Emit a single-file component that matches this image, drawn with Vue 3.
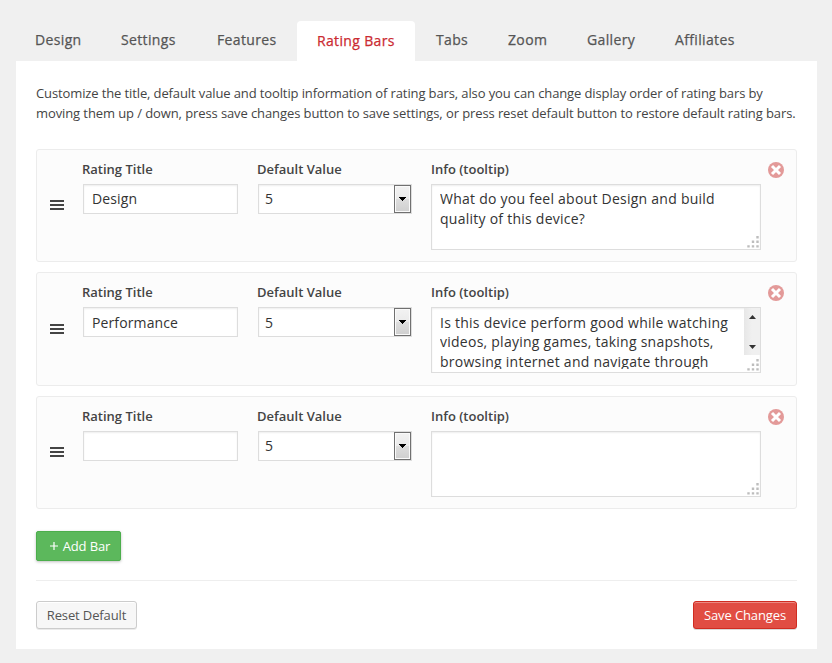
<script setup>
import { ref } from 'vue'

const tabs = [
  { name: 'Design', width: 86 },
  { name: 'Settings', width: 96 },
  { name: 'Features', width: 100 },
  { name: 'Rating Bars', width: 118 },
  { name: 'Tabs', width: 72 },
  { name: 'Zoom', width: 79 },
  { name: 'Gallery', width: 88 },
  { name: 'Affiliates', width: 100 },
]
const active = ref('Rating Bars')

const bars = ref([
  { title: 'Design', value: 5, info: 'What do you feel about Design and build quality of this device?', scroll: false },
  { title: 'Performance', value: 5, info: 'Is this device perform good while watching videos, playing games, taking snapshots, browsing internet and navigate through', scroll: true },
  { title: '', value: 5, info: '', scroll: false },
])

const addBar = () => bars.value.push({ title: '', value: 5, info: '', scroll: false })
const removeBar = (i) => bars.value.splice(i, 1)
</script>

<template>
  <div class="page">
    <nav class="tabs">
      <a
        v-for="t in tabs"
        :key="t.name"
        class="tab"
        :class="{ active: t.name === active }"
        :style="{ width: t.width + 'px' }"
        @click="active = t.name"
      >{{ t.name }}</a>
    </nav>
    <main class="panel">
      <p class="intro">
        <span class="lead">Customize the title, default value and tooltip information of rating bars, also you can change display order of rating bars by</span><br>
        moving them up / down, press save changes button to save settings, or press reset default button to restore default rating bars.
      </p>

      <div class="bars">
        <section v-for="(b, i) in bars" :key="i" class="card">
          <div class="handle"><i></i><i></i><i></i></div>
          <div class="field title">
            <label>Rating Title</label>
            <input v-model="b.title" class="box" type="text" spellcheck="false">
          </div>
          <div class="field value">
            <label>Default Value</label>
            <div class="box select">
              <span class="number">{{ b.value }}</span>
              <span class="drop">
                <svg width="7" height="4" viewBox="0 0 7 4" shape-rendering="crispEdges"><path d="M0 0h7v1H6v1H5v1H4v1H3V3H2V2H1V1H0z" /></svg>
              </span>
            </div>
          </div>
          <div class="field info">
            <label>Info (tooltip)</label>
            <div class="box area">
              <textarea v-model="b.info" spellcheck="false"></textarea>
              <div v-if="b.scroll" class="scrollbar">
                <svg width="7" height="4" viewBox="0 0 7 4"><path d="M3.5 0L7 4H0z" /></svg>
                <svg width="7" height="4" viewBox="0 0 7 4"><path d="M0 0h7L3.5 4z" /></svg>
              </div>
              <svg class="grip" width="12" height="12" viewBox="0 0 12 12" fill="#bdbdbd">
                <path d="M9.3 0h2.4v2.4H9.3zM4.8 4.6h2.4V7H4.8zM9.3 4.6h2.4V7H9.3zM.3 9.2h2.4v2.4H.3zM4.8 9.2h2.4v2.4H4.8zM9.3 9.2h2.4v2.4H9.3z" />
              </svg>
            </div>
          </div>
          <button class="remove" aria-label="Remove" @click="removeBar(i)">
            <svg width="16" height="16" viewBox="0 0 16 16">
              <circle cx="8" cy="8" r="8" fill="#e39a99" />
              <path d="M4 4l8 8M12 4l-8 8" stroke="#fff" stroke-width="3" />
            </svg>
          </button>
        </section>
      </div>

      <button class="btn add" @click="addBar">
        <svg width="8" height="8" viewBox="0 0 8 8"><path d="M4 0v8M0 4h8" stroke="#fff" stroke-width="1.2" /></svg>
        Add Bar
      </button>

      <footer class="footer">
        <button class="btn reset">Reset Default</button>
        <button class="btn save">Save Changes</button>
      </footer>
    </main>
  </div>
</template>

<style>
body {
  background: #f0f0f0;
  overflow: hidden;
}
</style>

<style scoped>
* {
  box-sizing: border-box;
}
.page {
  font-family: "Open Sans", "Noto Sans", sans-serif;
  font-size: 13px;
  color: #444;
  height: 663px;
  padding: 21px 15px 0;
  background: #f0f0f0;
}
.tabs {
  display: flex;
  height: 40px;
}
.tab {
  flex: none;
  padding-left: 20px;
  font-size: 14px;
  font-weight: 500;
  letter-spacing: 0.35px;
  -webkit-text-stroke: 0.25px currentColor;
  line-height: 38px;
  color: #555;
  white-space: nowrap;
  cursor: pointer;
}
.tab.active {
  margin-right: 1px;
  line-height: 40px;
  color: #cb2a31;
  background: #fff;
  border-radius: 4px 4px 0 0;
}
.panel {
  width: 801px;
  height: 588px;
  margin-left: 1px;
  padding: 22px 20px 0;
  background: #fff;
}
.intro {
  margin: 0;
  line-height: 20px;
  letter-spacing: -0.097px;
  white-space: nowrap;
}
.lead {
  letter-spacing: -0.117px;
}
.bars {
  display: flex;
  flex-direction: column;
  gap: 10.35px;
  margin-top: 25.95px;
}
.card {
  display: flex;
  height: 113.12px;
  padding: 10px 12px 0 13px;
  background: #fcfcfc;
  border: 1px solid #ececec;
  border-radius: 3px;
}
.handle {
  display: flex;
  flex-direction: column;
  gap: 2px;
  width: 14px;
  margin: 40.15px 19px 0 0;
}
.handle i {
  height: 2px;
  background: #444;
}
.field label {
  display: block;
  height: 24px;
  margin-left: -1px;
  font-size: 13px;
  font-weight: 600;
  line-height: 18px;
  white-space: nowrap;
}
.title {
  width: 155px;
  margin-right: 20px;
}
.value {
  width: 154px;
  margin-right: 19px;
}
.info {
  width: 330px;
  margin-right: 7px;
}
.info label {
  margin-left: 0;
}
.box {
  display: block;
  width: 100%;
  height: 30px;
  border: 1px solid #ddd;
  background: #fff;
  box-shadow: inset 0 1px 2px rgba(0, 0, 0, 0.07);
  font-family: inherit;
  font-size: 14px;
  color: #333;
  outline: none;
}
input.box {
  padding: 0 8px 0.6px;
  letter-spacing: 0.12px;
}
.select {
  display: flex;
  justify-content: space-between;
  padding: 0 0 0 6px;
  line-height: 28px;
}
.number {
  padding-top: 0.25px;
}
.drop {
  display: flex;
  align-items: center;
  justify-content: center;
  width: 17px;
  height: 28px;
  border: 1px solid #707070;
  box-shadow: inset 0 0 0 1px #fafafa;
  background: linear-gradient(#f2f2f2 0%, #ebebeb 48%, #ddd 52%, #cfcfcf 100%);
}
.area {
  position: relative;
  height: 66px;
  padding: 4.2px 0 0 8px;
}
.area textarea {
  display: block;
  width: 302px;
  height: 56px;
  padding: 0;
  border: 0;
  resize: none;
  overflow: hidden;
  background: transparent;
  outline: none;
  font-family: inherit;
  font-size: 14px;
  letter-spacing: 0.25px;
  line-height: 19.6px;
  color: #333;
}
.scrollbar {
  position: absolute;
  top: 0;
  right: 0;
  display: flex;
  flex-direction: column;
  align-items: center;
  justify-content: space-between;
  width: 16px;
  height: 47px;
  padding: 7px 0 6px;
  background: linear-gradient(90deg, #e7e7e7, #f0f0f0 50%);
  fill: #333;
}
.grip {
  position: absolute;
  right: 1px;
  bottom: 1px;
}
.remove {
  display: block;
  width: 16px;
  height: 16px;
  margin-top: 2px;
  padding: 0;
  border: 0;
  background: none;
  cursor: pointer;
}
.remove svg {
  display: block;
}
.btn {
  display: flex;
  align-items: center;
  justify-content: center;
  padding: 0;
  border-radius: 3px;
  font-family: inherit;
  font-size: 13px;
  letter-spacing: -0.12px;
  white-space: nowrap;
  cursor: pointer;
}
.add {
  gap: 5px;
  width: 85px;
  height: 30px;
  margin-top: 22px;
  padding-left: 3px;
  color: #fff;
  background: #5cb85c;
  border: 1px solid #4cae4c;
  border-radius: 2px;
  box-shadow: 0 1px 3px rgba(0, 0, 0, 0.25);
}
.footer {
  display: flex;
  justify-content: space-between;
  margin-top: 19px;
  padding-top: 20px;
  border-top: 1px solid #eee;
}
.reset {
  width: 101px;
  height: 28px;
  color: #555;
  background: #f7f7f7;
  border: 1px solid #ccc;
  box-shadow: inset 0 1px 0 #fff, 0 1px 0 rgba(0, 0, 0, 0.08);
}
.save {
  width: 104px;
  height: 28px;
  color: #fff;
  background: #e14d43;
  border: 1px solid #d02c21;
  box-shadow: inset 0 1px 0 #ec8a83, 0 1px 0 rgba(0, 0, 0, 0.15);
}
</style>
